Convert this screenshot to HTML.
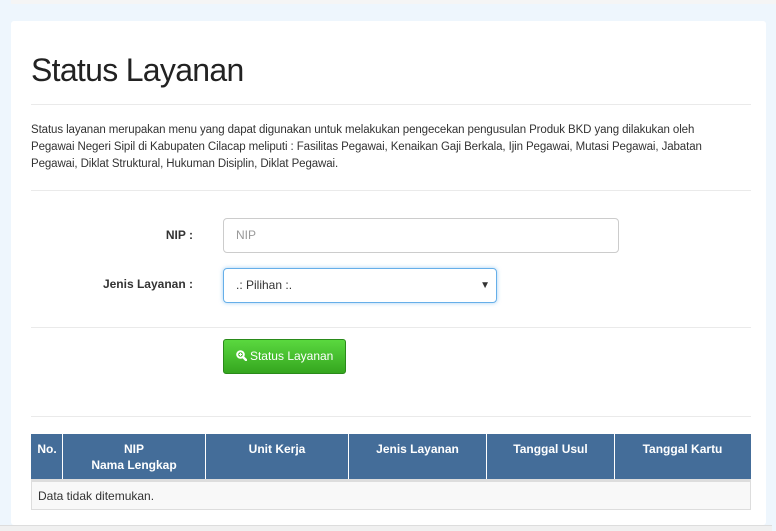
<!DOCTYPE html>
<html><head><style>
*{box-sizing:border-box;margin:0;padding:0}
body{width:776px;height:531px;background:#eef6fd;font-family:"Liberation Sans",sans-serif;position:relative;overflow:hidden;color:#333}
.top{position:absolute;left:11px;top:0;width:765px;height:4px;background:#f5f5f5}
.card{position:absolute;left:11px;top:21px;width:755px;height:504px;background:#fff;border-radius:3px}
h1{position:absolute;left:20px;top:31px;font-size:32px;font-weight:normal;color:#222;letter-spacing:-0.7px}
.hr{position:absolute;left:20px;width:720px;height:1px;background:#eaeaea}
.desc{position:absolute;left:20px;top:101px;width:700px;font-size:11.5px;line-height:17px;color:#333;letter-spacing:-0.1px}
.lbl{position:absolute;font-size:12px;font-weight:bold;text-align:right;width:180px;left:2px}
.inp{position:absolute;left:212px;border:1px solid #ccc;border-radius:4px;font-size:12px;color:#999;padding-left:12px}
.btn{position:absolute;left:212px;top:318px;width:123px;height:35px;border:1px solid #2a8a1a;border-radius:3px;background:linear-gradient(#5ad83f,#35a61f);color:#fff;font-size:12px;line-height:33px;text-align:center}
table{position:absolute;left:20px;top:413px;width:720px;border-collapse:collapse;font-size:12px}
th{background:#446d99;color:#fff;font-weight:bold;vertical-align:top;padding:6px 4px;height:45px;border:1px solid #fff;border-top:1px solid #446d99;line-height:16px}
th:first-child{border-left:1px solid #446d99}th:last-child{border-right:1px solid #446d99}
td{background:#f8f8f8;border:1px solid #ddd;border-top:3px solid #ddd;height:29px;padding:0 6px}
.bot{position:absolute;left:0;top:525px;width:772px;height:6px;background:#f0f0f0;border-top:1px solid #ddd}
</style></head><body>
<div class="top"></div>
<div class="card">
<h1>Status Layanan</h1>
<div class="hr" style="top:83px"></div>
<div class="desc">Status layanan merupakan menu yang dapat digunakan untuk melakukan pengecekan pengusulan Produk BKD yang dilakukan oleh Pegawai Negeri Sipil di Kabupaten Cilacap meliputi : Fasilitas Pegawai, Kenaikan Gaji Berkala, Ijin Pegawai, Mutasi Pegawai, Jabatan Pegawai, Diklat Struktural, Hukuman Disiplin, Diklat Pegawai.</div>
<div class="hr" style="top:169px"></div>
<div class="lbl" style="top:207px">NIP :</div>
<div class="inp" style="top:197px;width:396px;height:35px;line-height:33px">NIP</div>
<div class="lbl" style="top:256px">Jenis Layanan :</div>
<div class="inp" style="top:247px;width:274px;height:35px;line-height:33px;border-color:#66afe9;color:#333;box-shadow:0 0 4px rgba(102,175,233,.6)">.: Pilihan :.<span style="position:absolute;right:6px;font-size:10px">▼</span></div>
<div class="hr" style="top:306px"></div>
<div class="btn"><svg width="11" height="11" viewBox="0 0 11 11" style="vertical-align:-1px"><circle cx="4.5" cy="4.5" r="3.3" fill="none" stroke="#fff" stroke-width="2"/><path d="M7 7l3 3" stroke="#fff" stroke-width="2.4" stroke-linecap="round"/><path d="M4.5 3v3M3 4.5h3" stroke="#fff" stroke-width="1"/></svg> Status Layanan</div>
<div class="hr" style="top:395px"></div>
<table><tr><th style="width:31px">No.</th><th style="width:143px">NIP<br>Nama Lengkap</th><th style="width:143px">Unit Kerja</th><th style="width:138px">Jenis Layanan</th><th style="width:128px">Tanggal Usul</th><th>Tanggal Kartu</th></tr>
<tr><td colspan="6">Data tidak ditemukan.</td></tr></table>
</div>
<div class="bot"></div>
</body></html>
